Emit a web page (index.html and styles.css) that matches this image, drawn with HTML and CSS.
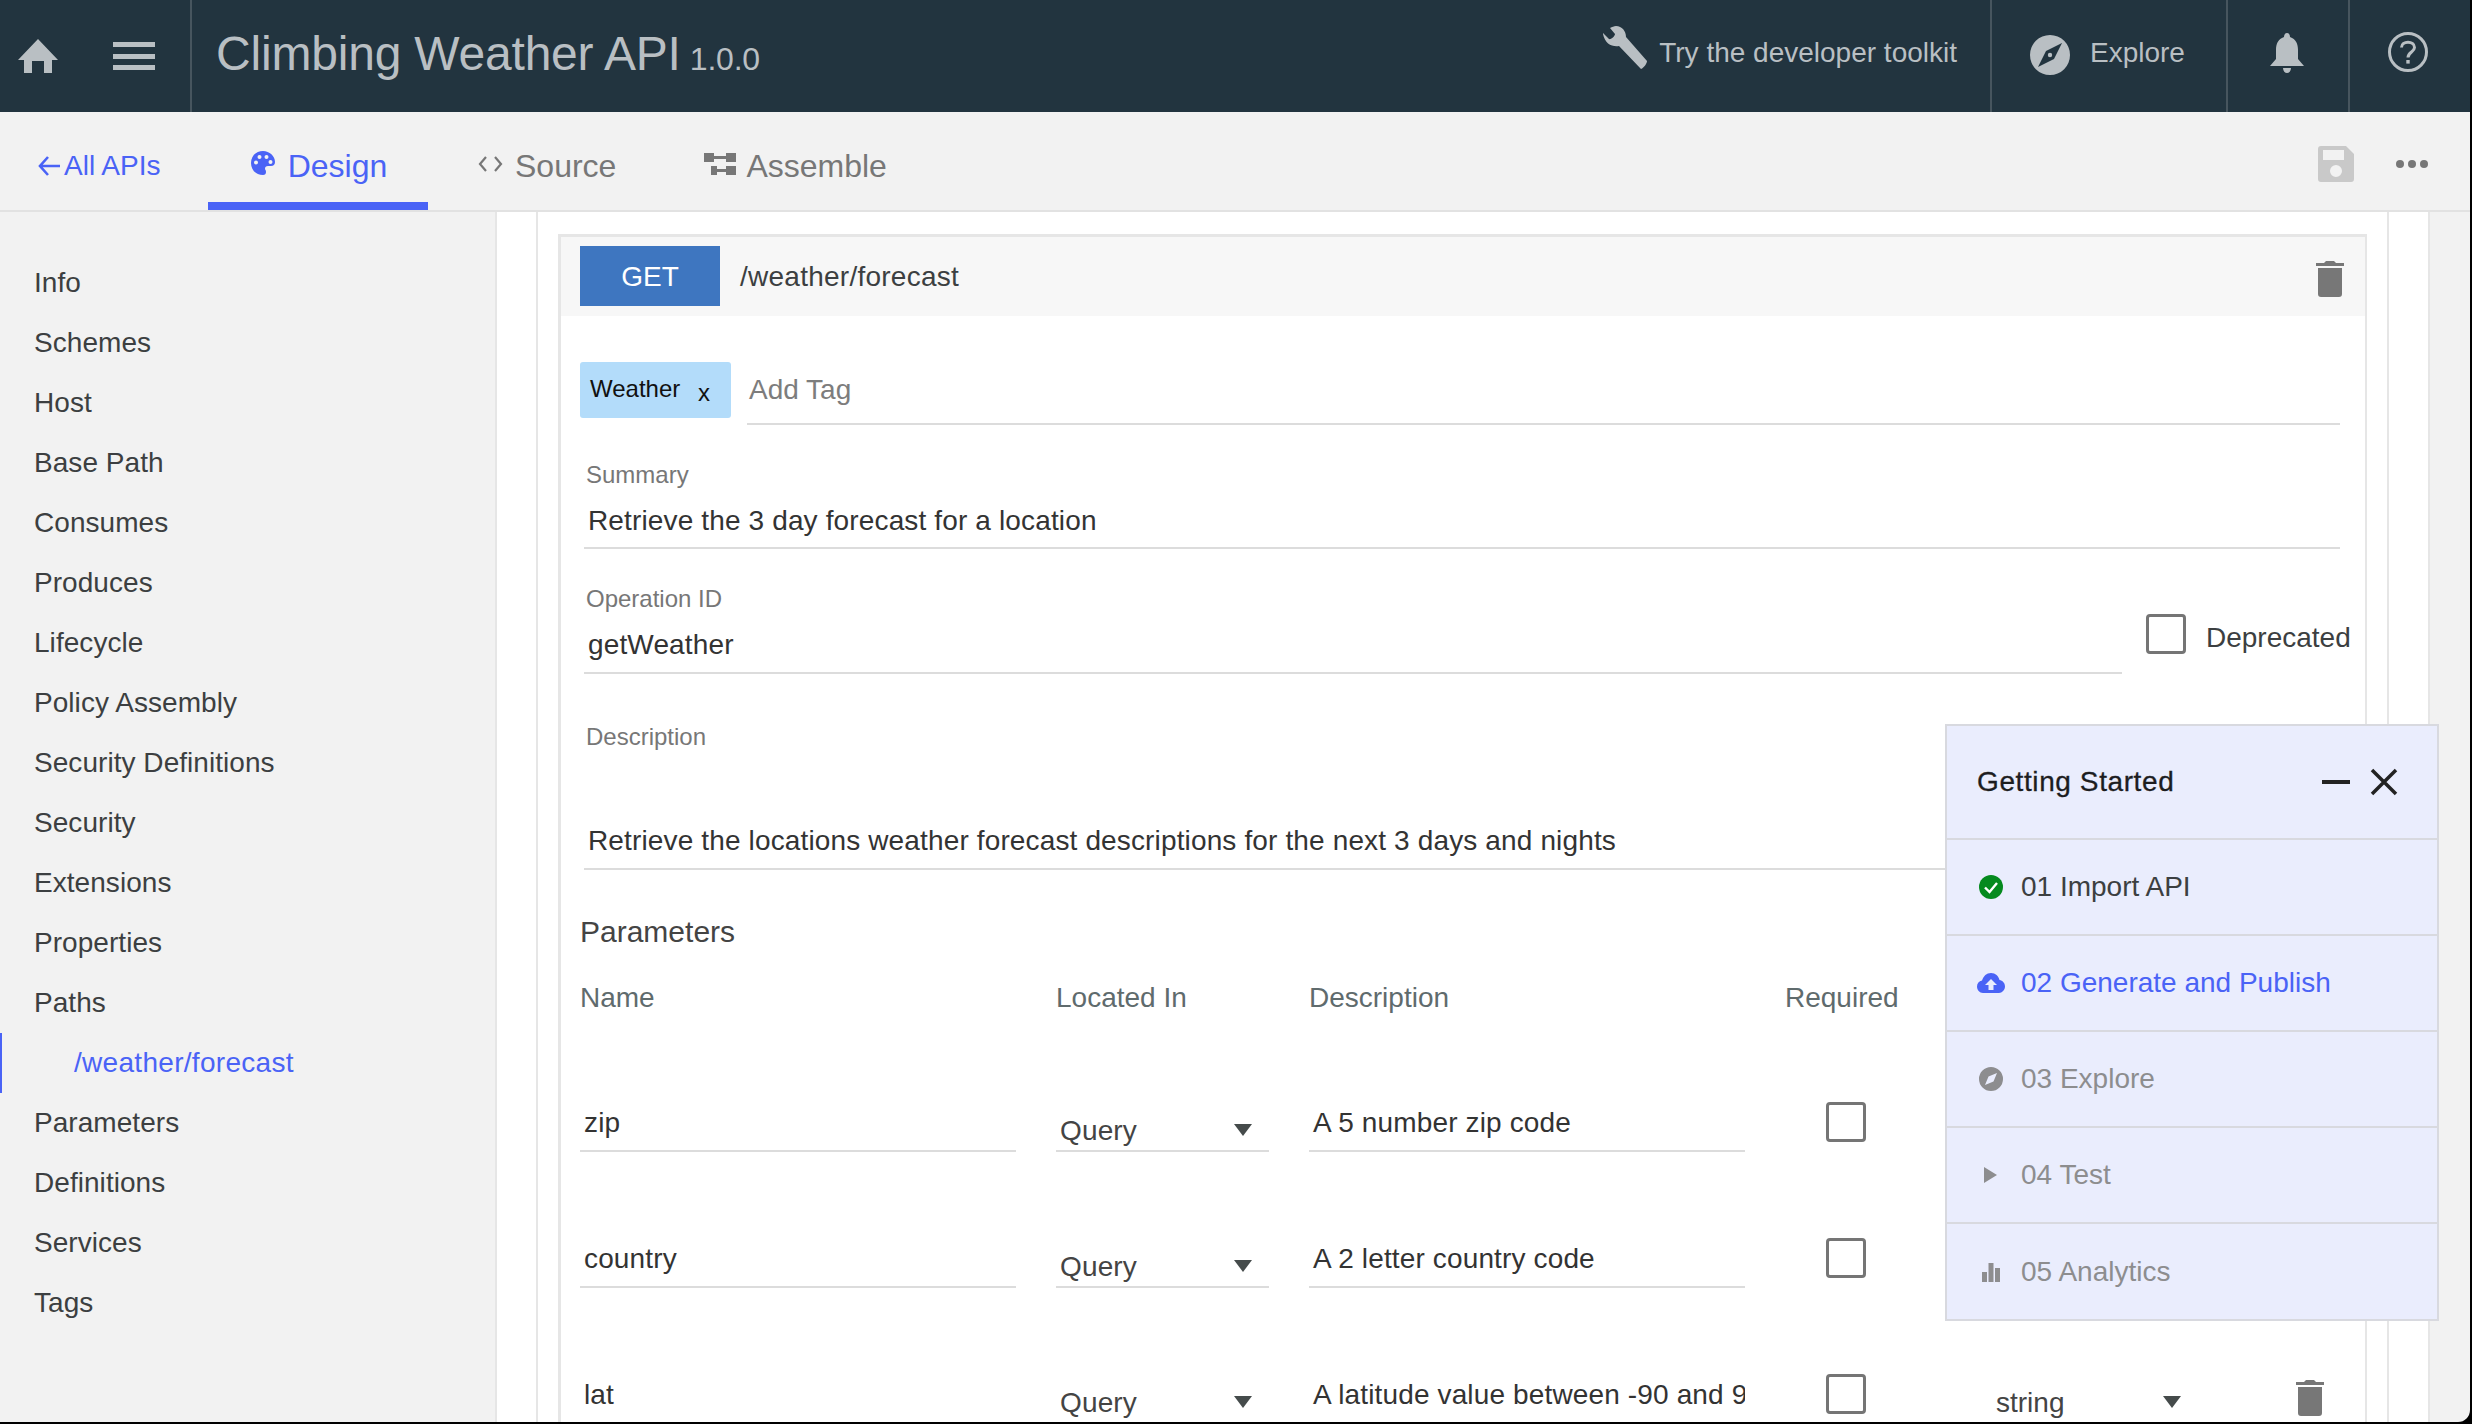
FILE: index.html
```html
<!DOCTYPE html>
<html lang="en">
<head>
<meta charset="UTF-8">
<title>Climbing Weather API</title>
<link rel="stylesheet" href="styles.css">
</head>
<body>
<div class="app">

 <!-- top bar -->
 <header class="topbar">
  <div class="top-left">
   <svg class="ic-home" viewBox="0 0 40 34"><path d="M20 0 L40 21 H34 V34 H26 V22 H14 V34 H6 V21 H0 Z"/></svg>
   <svg class="ic-menu" viewBox="0 0 42 28"><path d="M0 0H42V5H0ZM0 12H42V17H0ZM0 23H42V28H0Z"/></svg>
  </div>
  <div class="top-title">Climbing Weather API <span class="version">1.0.0</span></div>
  <div class="top-link toolkit">
   <svg class="ic-wrench" viewBox="0 0 44 44"><path d="M13 0 C19 0 23 5 23 11 L44 35 C44 37 41 42 38 43 L16 20 C9 21 2 18 0 8 L0 7 L6 13 C8 14 12 10 12 8 L7 2 C9 1 11 0 13 0Z"/></svg>
   <span>Try the developer toolkit</span>
  </div>
  <div class="top-link explore">
   <svg class="ic-compass" viewBox="0 0 40 40"><path fill-rule="evenodd" d="M20 0a20 20 0 1 0 0 40a20 20 0 0 0 0-40ZM32 8 L24 24 L8 32 L16 16 Z"/><circle cx="20" cy="20" r="2.200"/></svg>
   <span>Explore</span>
  </div>
  <div class="top-icon bell">
   <svg class="ic-bell" viewBox="0 0 34 40"><path d="M17 0 C19 0 20 2 20 4 C26 6 28 11 28 17 L28 26 L34 33 H0 L6 26 V17 C6 11 8 6 14 4 C14 2 15 0 17 0ZM13 35 H21 C21 38 19 40 17 40 C15 40 13 38 13 35Z"/></svg>
  </div>
  <div class="top-icon help">
   <svg class="ic-help" viewBox="0 0 40 40"><circle cx="20" cy="20" r="18.500" fill="none" stroke="#b9bfc3" stroke-width="3"/><path d="M13.500 15.500 C13.500 8.500 26.500 8.500 26.500 15.500 C26.500 20 20 20 20 25.500" fill="none" stroke="#b9bfc3" stroke-width="3"/><rect x="18.300" y="28" width="3.400" height="3.600" fill="#b9bfc3"/></svg>
  </div>
 </header>

 <!-- tabs -->
 <nav class="tabs">
  <a class="back"><svg class="ic-back" viewBox="0 0 22 20"><path d="M10 1 L2 10 L10 19 M2 10 H22" fill="none" stroke="#4a63f6" stroke-width="2.600"/></svg>All APIs</a>
  <a class="tab active">
   <svg class="ic-palette" viewBox="0 0 24 24"><path fill-rule="evenodd" d="M12 0 C5 0 0 5 0 12 C0 19 5 24 12 24 C14 24 15 23 15 21 C15 19 14 19 14 17.500 C14 16 15 15 17 15 H20 C22.500 15 24 13.500 24 11 C24 5 18.500 0 12 0ZM5 13.500a2 2 0 1 1 0-4a2 2 0 0 1 0 4ZM8.500 8a2 2 0 1 1 0-4a2 2 0 0 1 0 4ZM15.500 8a2 2 0 1 1 0-4a2 2 0 0 1 0 4ZM19.500 13a2 2 0 1 1 0-4a2 2 0 0 1 0 4Z"/></svg>
   Design
  </a>
  <a class="tab source">
   <svg class="ic-code" viewBox="0 0 25 16"><path d="M8 1 L2 8 L8 15 M17 1 L23 8 L17 15" fill="none" stroke="#777" stroke-width="2.200"/></svg>
   Source
  </a>
  <a class="tab assemble">
   <svg class="ic-assemble" viewBox="0 0 32 22"><path d="M0 0H10V9H0ZM22 0H32V9H22ZM10 3H22V6H10ZM22 13H32V22H22ZM7 13V22H13V19H22V16H13V13Z"/></svg>
   Assemble
  </a>
  <div class="tab-tools">
   <svg class="ic-save" viewBox="0 0 36 36"><path fill-rule="evenodd" d="M3 0H28L36 8V33C36 35 35 36 33 36H3C1 36 0 35 0 33V3C0 1 1 0 3 0ZM5 4V14H26V4ZM18 19a6 6 0 1 0 0 12a6 6 0 0 0 0-12Z"/></svg>
   <svg class="ic-dots" viewBox="0 0 32 8"><circle cx="4" cy="4" r="4"/><circle cx="16" cy="4" r="4"/><circle cx="28" cy="4" r="4"/></svg>
  </div>
 </nav>

 <div class="body-row">

  <!-- side nav -->
  <aside class="sidebar">
   <a class="side-item">Info</a>
   <a class="side-item">Schemes</a>
   <a class="side-item">Host</a>
   <a class="side-item">Base Path</a>
   <a class="side-item">Consumes</a>
   <a class="side-item">Produces</a>
   <a class="side-item">Lifecycle</a>
   <a class="side-item">Policy Assembly</a>
   <a class="side-item">Security Definitions</a>
   <a class="side-item">Security</a>
   <a class="side-item">Extensions</a>
   <a class="side-item">Properties</a>
   <a class="side-item">Paths</a>
   <a class="side-item sub">/weather/forecast</a>
   <a class="side-item">Parameters</a>
   <a class="side-item">Definitions</a>
   <a class="side-item">Services</a>
   <a class="side-item">Tags</a>
  </aside>

  <div class="gutter"></div>

  <main class="content">
   <section class="card">
    <div class="card-head">
     <span class="verb">GET</span>
     <span class="path">/weather/forecast</span>
     <svg class="ic-trash head-trash" viewBox="0 0 28 36"><path d="M10 0H18L20 2H28V5H0V2H8ZM2 7H26V33C26 35 25 36 23 36H5C3 36 2 35 2 33Z"/></svg>
    </div>

    <div class="card-body">
     <div class="tag-row">
      <span class="tag">Weather <i class="tag-x">x</i></span>
      <span class="tag-input">Add Tag</span>
     </div>

     <div class="field summary">
      <label>Summary</label>
      <div class="value">Retrieve the 3 day forecast for a location</div>
     </div>

     <div class="op-row">
      <div class="field opid">
       <label>Operation ID</label>
       <div class="value">getWeather</div>
      </div>
      <div class="deprecated"><span class="box"></span><span class="dep-text">Deprecated</span></div>
     </div>

     <div class="field desc">
      <label>Description</label>
      <div class="value">Retrieve the locations weather forecast descriptions for the next 3 days and nights</div>
     </div>

     <h3 class="params-title">Parameters</h3>

     <div class="param-grid param-head">
      <span>Name</span><span>Located In</span><span>Description</span><span>Required</span><span>Type</span><span></span>
     </div>

     <div class="param-grid param-row">
      <div class="cell">zip</div>
      <div class="cell sel">Query</div>
      <div class="cell">A 5 number zip code</div>
      <div class="check"><span class="box"></span></div>
      <div class="type">string</div>
      <svg class="ic-trash" viewBox="0 0 28 36"><path d="M10 0H18L20 2H28V5H0V2H8ZM2 7H26V33C26 35 25 36 23 36H5C3 36 2 35 2 33Z"/></svg>
     </div>
     <div class="param-grid param-row">
      <div class="cell">country</div>
      <div class="cell sel">Query</div>
      <div class="cell">A 2 letter country code</div>
      <div class="check"><span class="box"></span></div>
      <div class="type">string</div>
      <svg class="ic-trash" viewBox="0 0 28 36"><path d="M10 0H18L20 2H28V5H0V2H8ZM2 7H26V33C26 35 25 36 23 36H5C3 36 2 35 2 33Z"/></svg>
     </div>
     <div class="param-grid param-row">
      <div class="cell">lat</div>
      <div class="cell sel">Query</div>
      <div class="cell">A latitude value between -90 and 90</div>
      <div class="check"><span class="box"></span></div>
      <div class="type">string</div>
      <svg class="ic-trash" viewBox="0 0 28 36"><path d="M10 0H18L20 2H28V5H0V2H8ZM2 7H26V33C26 35 25 36 23 36H5C3 36 2 35 2 33Z"/></svg>
     </div>
    </div>
   </section>
  </main>

  <div class="rail"></div>
 </div>

 <!-- floating panel -->
 <div class="getting-started">
  <div class="gs-head">
   <span>Getting Started</span>
   <svg class="gs-min" viewBox="0 0 28 4"><rect width="28" height="4"/></svg>
   <svg class="gs-close" viewBox="0 0 28 28"><path d="M2 2 L26 26 M26 2 L2 26" fill="none" stroke="#222" stroke-width="3.500"/></svg>
  </div>
  <div class="gs-row done">
   <svg class="gs-ic" viewBox="0 0 24 24"><circle cx="12" cy="12" r="12" fill="#058a1e"/><path d="M6 12.500 L10.500 17 L18 8" fill="none" stroke="#fff" stroke-width="2.400"/></svg>
   01 Import API
  </div>
  <div class="gs-row current">
   <svg class="gs-ic cloud" viewBox="0 0 28 20"><path fill-rule="evenodd" d="M14 0 C18.500 0 21.500 3 22.500 7 C25.500 7.500 28 10 28 13.500 C28 17 25 20 22 20 H6 C2.500 20 0 17 0 13.500 C0 10.500 2 8 5 7.500 C6.500 3 9.500 0 14 0ZM14 6 L8 12 H11.500 V17 H16.500 V12 H20Z"/></svg>
   02 Generate and Publish
  </div>
  <div class="gs-row todo">
   <svg class="gs-ic" viewBox="0 0 24 24"><path fill="#8d8d8f" fill-rule="evenodd" d="M12 0a12 12 0 1 0 0 24a12 12 0 0 0 0-24ZM18 6 L14.500 14.500 L6 18 L9.500 9.500Z"/></svg>
   03 Explore
  </div>
  <div class="gs-row todo">
   <svg class="gs-ic" viewBox="0 0 24 24"><path fill="#8d8d8f" d="M5 4 L18 12 L5 20Z"/></svg>
   04 Test
  </div>
  <div class="gs-row todo last">
   <svg class="gs-ic" viewBox="0 0 24 24"><path fill="#8d8d8f" d="M3 12H8V22H3ZM9.500 3H14.500V22H9.500ZM16 8H21V22H16Z"/></svg>
   05 Analytics
  </div>
 </div>

</div>
</body>
</html>
```
FILE: styles.css
```css
html, body {
 margin: 0;
 height: 100%;
 background: #000;
}

body {
 font-family: "Liberation Sans", Arial, sans-serif;
 color: #3c3f41;
 overflow: hidden;
}

svg {
 display: block;
 flex: none;
}

.app {
 position: relative;
 width: 2470px;
 height: 1422px;
 background: #f2f2f2;
 border-bottom-right-radius: 12px;
 display: flex;
 flex-direction: column;
 overflow: hidden;
}

/* top bar */
.topbar {
 height: 112px;
 flex: none;
 display: flex;
 align-items: center;
 background: #22343f;
 color: #b9bfc3;
}

.top-left {
 width: 192px;
 height: 100%;
 box-sizing: border-box;
 display: flex;
 align-items: center;
 gap: 55px;
 padding-left: 18px;
 border-right: 2px solid #47555e;
 fill: #b9bfc3;
}

.ic-home { width: 40px; height: 34px; }
.ic-menu { width: 42px; height: 28px; }

.top-title {
 flex: 1;
 padding-left: 24px;
 padding-bottom: 6px;
 font-size: 48px;
 letter-spacing: -0.2px;
 white-space: nowrap;
}

.version { font-size: 32px; margin-left: -4px; }

.top-link {
 height: 100%;
 display: flex;
 align-items: center;
 font-size: 28px;
 box-sizing: border-box;
 fill: #b9bfc3;
}

.top-link span { padding-bottom: 6px; }

.toolkit {
 gap: 12px;
 padding-right: 33px;
 border-right: 2px solid #47555e;
}

.ic-wrench { width: 44px; height: 44px; margin-top: -16px; }

.explore {
 width: 236px;
 gap: 20px;
 padding-left: 38px;
 border-right: 2px solid #47555e;
}

.ic-compass { width: 40px; height: 40px; margin-top: -2px; }

.top-icon {
 height: 100%;
 display: flex;
 align-items: center;
 justify-content: center;
 box-sizing: border-box;
 fill: #b9bfc3;
}

.bell { width: 122px; padding-right: 2px; border-right: 2px solid #47555e; }
.ic-bell { width: 34px; height: 40px; margin-top: -6px; }

.help { width: 120px; padding-right: 4px; }
.ic-help { width: 40px; height: 40px; margin-top: -8px; }

/* tabs */
.tabs {
 height: 100px;
 flex: none;
 box-sizing: border-box;
 display: flex;
 align-items: stretch;
 background: #f2f2f2;
 border-bottom: 2px solid #e2e2e2;
 font-size: 32px;
 color: #777;
}

.back {
 width: 208px;
 box-sizing: border-box;
 padding-left: 38px;
 padding-top: 10px;
 display: flex;
 align-items: center;
 gap: 4px;
 font-size: 28px;
 color: #4a63f6;
}

.ic-back { width: 22px; height: 20px; }

.tab {
 display: flex;
 align-items: center;
 box-sizing: border-box;
 height: 98px;
 padding-top: 10px;
}

.tab.active {
 width: 220px;
 justify-content: center;
 gap: 13px;
 padding-left: 2px;
 color: #4a63f6;
 fill: #4a63f6;
 border-bottom: 8px solid #4a63f6;
 padding-top: 18px;
}

.ic-palette { width: 24px; height: 24px; margin-top: -6px; }

.source { margin-left: 50px; gap: 12px; }
.ic-code { width: 25px; height: 16px; margin-top: -4px; }

.assemble { margin-left: 88px; gap: 10px; fill: #777; }
.ic-assemble { width: 32px; height: 22px; margin-top: -4px; }

.tab-tools {
 margin-left: auto;
 display: flex;
 align-items: center;
 gap: 42px;
 padding-right: 42px;
 padding-top: 6px;
}

.ic-save { width: 36px; height: 36px; fill: #c9c9c9; }
.ic-dots { width: 32px; height: 8px; fill: #777; }

/* main row */
.body-row {
 flex: 1;
 min-height: 0;
 display: flex;
}

.sidebar {
 width: 497px;
 flex: none;
 box-sizing: border-box;
 padding-top: 41px;
 border-right: 2px solid #e6e6e6;
 font-size: 28px;
 letter-spacing: 0.05px;
}

.side-item {
 display: block;
 height: 60px;
 line-height: 60px;
 padding-left: 34px;
}

.side-item.sub {
 padding-left: 74px;
 letter-spacing: 0.3px;
 color: #4a63f6;
 box-shadow: inset 2px 0 0 #4a63f6;
}

.gutter {
 width: 41px;
 flex: none;
 box-sizing: border-box;
 background: #fff;
 border-right: 2px solid #e6e6e6;
}

.content {
 flex: 1;
 min-width: 0;
 background: #fff;
 padding: 22px 20px 0 20px;
 overflow: hidden;
}

.rail {
 width: 43px;
 flex: none;
 box-sizing: border-box;
 background: #fff;
 border-left: 2px solid #e6e6e6;
 border-right: 2px solid #e6e6e6;
 margin-right: 40px;
}

.card {
 border: 3px solid #e6e6e6;
 border-bottom: 0;
 border-right-width: 2px;
}

.card-head {
 height: 79px;
 box-sizing: border-box;
 display: flex;
 align-items: flex-start;
 padding: 9px 21px 0 19px;
 background: #f7f7f7;
}

.verb {
 width: 140px;
 height: 60px;
 line-height: 62px;
 text-align: center;
 background: #3e76c0;
 color: #fff;
 font-size: 28px;
}

.path {
 margin-left: 20px;
 line-height: 62px;
 font-size: 28px;
 letter-spacing: 0.25px;
}

.head-trash { margin-left: auto; margin-top: 15px; }

.ic-trash {
 width: 28px;
 height: 36px;
 fill: #777;
}

.card-body {
 padding: 46px 0 0 19px;
}

/* tag line */
.tag-row {
 display: flex;
 padding-right: 25px;
}

.tag {
 width: 151px;
 height: 56px;
 line-height: 54px;
 box-sizing: border-box;
 padding-left: 10px;
 background: #b3dcfa;
 border-radius: 3px;
 color: #111;
 font-size: 24px;
 white-space: nowrap;
}

.tag-x {
 font-style: normal;
 font-size: 24px;
 margin-left: 11px;
 position: relative;
 top: 4px;
}

.tag-input {
 flex: 1;
 margin-left: 16px;
 height: 63px;
 line-height: 55px;
 box-sizing: border-box;
 padding-left: 2px;
 font-size: 28px;
 color: #7d7d7d;
 border-bottom: 2px solid #dcdcdc;
}

/* fields */
.field {
 margin-left: 4px;
 border-bottom: 2px solid #dcdcdc;
}

.field label {
 display: block;
 padding-left: 2px;
 font-size: 24px;
 line-height: 30px;
 color: #777;
}

.field .value {
 padding-left: 4px;
 font-size: 28px;
 line-height: 40px;
 letter-spacing: 0.14px;
 color: #333;
}

.summary { margin-top: 35px; margin-right: 25px; padding-bottom: 6px; }
.summary .value { margin-top: 11px; }

.op-row {
 display: flex;
 margin-top: 35px;
 margin-right: 27px;
}

.opid { flex: 1; padding-bottom: 7px; }
.opid .value { margin-top: 11px; }

.deprecated {
 width: 220px;
 flex: none;
 display: flex;
 align-items: center;
 gap: 20px;
 margin-left: 23px;
 margin-right: -27px;
 padding-left: 1px;
 box-sizing: border-box;
 font-size: 28px;
 white-space: nowrap;
 height: 62px;
 margin-top: 19px;
}

.dep-text { padding-top: 7px; }

.box {
 display: block;
 flex: none;
 width: 40px;
 height: 40px;
 box-sizing: border-box;
 border: 3.5px solid #757575;
 border-radius: 4px;
}

.desc { margin-top: 48px; margin-right: 25px; padding-bottom: 7px; }
.desc .value { margin-top: 69px; white-space: nowrap; }

.params-title {
 margin: 42px 0 0;
 font-weight: normal;
 font-size: 30px;
 line-height: 40px;
 color: #444;
}

/* parameter table */
.param-grid {
 display: grid;
 grid-template-columns: 436px 213px 436px 171px 280px 40px;
 column-gap: 40px;
}

.param-head {
 height: 40px;
 margin-top: 26px;
 font-size: 28px;
 line-height: 40px;
 color: #5f6b6d;
}

.param-row {
 height: 136px;
 box-sizing: border-box;
 align-items: end;
 white-space: nowrap;
}

.param-head + .param-row { margin-top: -2px; }

.cell {
 height: 56px;
 line-height: 54px;
 box-sizing: border-box;
 padding-left: 4px;
 font-size: 28px;
 letter-spacing: 0.14px;
 color: #333;
 border-bottom: 2px solid #dcdcdc;
 overflow: hidden;
}

.cell.sel {
 position: relative;
 line-height: 70px;
 color: #444;
}

.cell.sel::after,
.type::after {
 content: "";
 position: absolute;
 right: 17px;
 top: 28px;
 border-left: 9.5px solid transparent;
 border-right: 9.5px solid transparent;
 border-top: 12px solid #454b4b;
}

.check {
 height: 56px;
 box-sizing: border-box;
 padding-left: 41px;
 padding-top: 6px;
}

.type {
 position: relative;
 height: 56px;
 line-height: 70px;
 font-size: 28px;
 color: #444;
 width: 210px;
}

.type::after { right: 25px; top: 28px; }

.param-row .ic-trash {
 margin-left: -20px;
 margin-bottom: 8px;
}

/* floating panel */
.getting-started {
 position: absolute;
 left: 1945px;
 top: 724px;
 width: 494px;
 height: 597px;
 box-sizing: border-box;
 border: 2px solid #d8d9df;
 background: #eaedfd;
 font-size: 28px;
}

.gs-head {
 height: 112px;
 display: flex;
 align-items: center;
 padding: 0 39px 0 30px;
 font-size: 28px;
 letter-spacing: 0.6px;
 -webkit-text-stroke: 0.3px #1d1d1f;
 color: #1d1d1f;
}

.gs-head span { flex: 1; }

.gs-min { width: 28px; height: 4px; fill: #222; margin-right: 20px; }
.gs-close { width: 28px; height: 28px; }

.gs-row {
 height: 94px;
 box-sizing: content-box;
 display: flex;
 align-items: center;
 gap: 18px;
 padding-left: 32px;
 border-top: 2px solid #d8d9df;
 line-height: 36px;
}

.gs-row.last { height: 95px; }

.gs-ic { width: 24px; height: 24px; }
.gs-ic.cloud { width: 28px; height: 20px; margin-left: -2px; margin-right: -2px; fill: #4a63f6; }

.done { color: #3c3f41; }
.current { color: #4a63f6; }
.todo { color: #8d8d8f; }
```
